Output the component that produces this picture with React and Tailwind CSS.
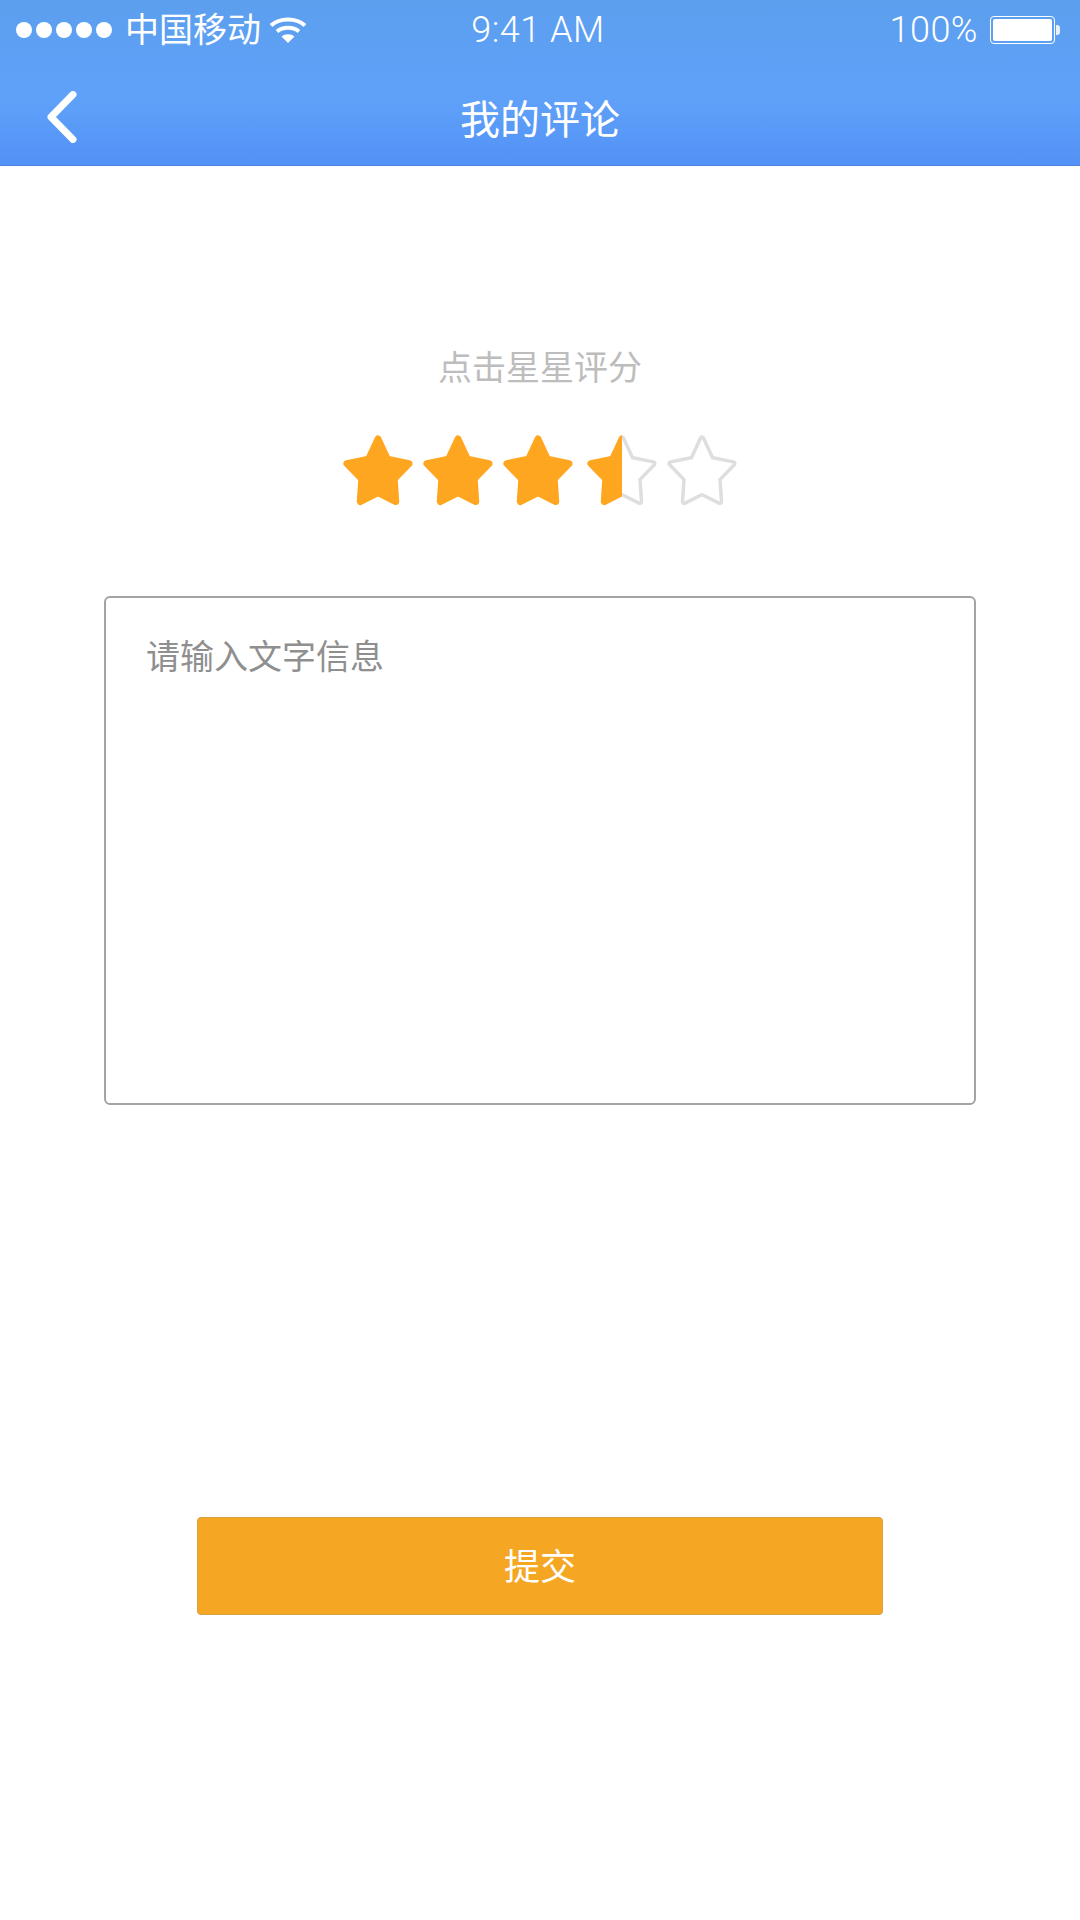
const STAR_POINTS = '36,5 45.500,25.500 67.500,30 52.500,45.500 54,68.500 36,59.500 18,68.500 19.500,45.500 4.500,30 26.500,25.500';

const FilledStar = () => (
  <polygon points={STAR_POINTS} fill="#fea61f" stroke="#fea61f" strokeWidth="7" strokeLinejoin="round" />
);

const OutlineStar = () => (
  <>
    <polygon points={STAR_POINTS} fill="#dedede" stroke="#dedede" strokeWidth="7" strokeLinejoin="round" />
    <polygon points={STAR_POINTS} fill="#ffffff" />
  </>
);

const Star = ({ filled }) => (
  <svg width="72" height="72" viewBox="-0.500 0 73 73">
    {filled ? <FilledStar /> : <OutlineStar />}
  </svg>
);

const HalfStar = () => (
  <svg className="ml-[4px]" width="72" height="72" viewBox="-0.500 0 73 73">
    <defs>
      <clipPath id="left-half">
        <rect x="-2" y="-2" width="38" height="80" />
      </clipPath>
      <clipPath id="right-half">
        <rect x="36" y="-2" width="38" height="80" />
      </clipPath>
    </defs>
    <g clipPath="url(#right-half)">
      <OutlineStar />
    </g>
    <g clipPath="url(#left-half)">
      <FilledStar />
    </g>
  </svg>
);

export default function App() {
  return (
    <div className="w-[1080px] h-[1920px] bg-white overflow-hidden font-['Liberation_Sans','Noto_Sans_CJK_SC',sans-serif]">
      {/* Header */}
      <div className="h-[166px] bg-gradient-to-b from-[#5c9fee] via-[#5fa1f9] via-60% to-[#5391f6] border-b border-[#4d82dc] text-white">
        <div className="h-[60px] flex items-center justify-between pl-[16px] pr-[20px]">
          <div className="flex items-center w-[400px]">
            <div className="flex gap-[4px]">
              <span className="w-[16px] h-[16px] rounded-full bg-white"></span>
              <span className="w-[16px] h-[16px] rounded-full bg-white"></span>
              <span className="w-[16px] h-[16px] rounded-full bg-white"></span>
              <span className="w-[16px] h-[16px] rounded-full bg-white"></span>
              <span className="w-[16px] h-[16px] rounded-full bg-white"></span>
            </div>
            <span className="ml-[13px] text-[34px] leading-[40px]">中国移动</span>
            <svg className="ml-[8px]" width="38" height="28" viewBox="0 0 38 28" fill="none">
              <path d="M2 9.500C11 1.500 27 1.500 36 9.500" stroke="#fff" strokeWidth="4" />
              <path d="M8 15.500C14 10.500 24 10.500 30 15.500" stroke="#fff" strokeWidth="4" />
              <path d="M12.500 20.500C16 17.500 22 17.500 25.500 20.500L19 27z" fill="#fff" />
            </svg>
          </div>
          <span className="font-['Roboto'] font-light text-[36px] leading-[40px] tracking-[0.5px]">9:41 AM</span>
          <div className="flex items-center justify-end w-[400px]">
            <span className="font-['Roboto'] font-light text-[36px] leading-[40px] tracking-[0.5px]">100%</span>
            <div className="ml-[12px] w-[65px] h-[28px] rounded-[4px] border border-white p-[2px]">
              <div className="w-full h-full bg-white rounded-[2px]"></div>
            </div>
            <div className="ml-[1px] w-[4px] h-[10px] rounded-r-[3px] bg-[#e8f0fc]"></div>
          </div>
        </div>
        <div className="h-[105px] relative flex items-center justify-center">
          <svg className="absolute left-[46px] top-[31px]" width="32" height="52" viewBox="0 0 32 52" fill="none">
            <path d="M27 3.500L5 26l22 22.500" stroke="#fff" strokeWidth="7" strokeLinecap="round" strokeLinejoin="round" />
          </svg>
          <h1 className="pt-[14px] text-[40px] leading-[50px] font-normal">我的评论</h1>
        </div>
      </div>

      {/* Rating */}
      <div className="pt-[181px] flex flex-col items-center">
        <p className="text-[34px] leading-[42px] text-[#bdbdbd]">点击星星评分</p>
        <div className="mt-[45px] flex gap-[8px] h-[72px]">
          <Star filled />
          <Star filled />
          <Star filled />
          <HalfStar />
          <Star />
        </div>
      </div>

      {/* Comment box */}
      <div className="mt-[90px] mx-[104px] h-[509px] border-2 border-[#a3a3a3] rounded-[6px] px-[40px] pt-[38px]">
        <p className="text-[34px] leading-[42px] text-[#8f8f8f]">请输入文字信息</p>
      </div>

      {/* Submit */}
      <button className="block mt-[412px] mx-auto w-[686px] h-[98px] pt-[4px] rounded-[4px] bg-[#f5a623] border border-[#d9a040] text-white text-[36px]">
        提交
      </button>
    </div>
  );
}
